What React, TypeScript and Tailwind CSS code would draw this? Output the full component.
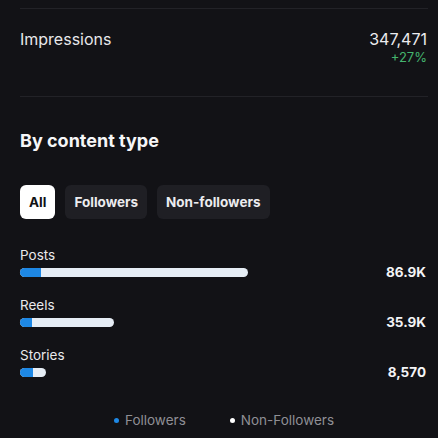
import React from "react";

type Row = { label: string; value: string; total: number; followers: number };

const rows: Row[] = [
  { label: "Posts", value: "86.9K", total: 228, followers: 21 },
  { label: "Reels", value: "35.9K", total: 94, followers: 12 },
  { label: "Stories", value: "8,570", total: 26, followers: 13 },
];

const tabs = ["All", "Followers", "Non-followers"];

function ContentRow({ row }: { row: Row }) {
  return (
    <div className="mt-[20px] first:mt-[28px]">
      <div className="text-[13.5px] leading-4 text-[#e9e9ec]">{row.label}</div>
      <div className="mt-[5px] flex h-[9px] items-center justify-between">
        <div
          className="flex h-[9px] overflow-hidden rounded-full bg-[#e6edf5]"
          style={{ width: row.total }}
        >
          <div className="h-full bg-[#1e88e5]" style={{ width: row.followers }} />
        </div>
        <div className="pr-[2px] text-[13.5px] font-bold leading-none text-[#f4f4f6]">
          {row.value}
        </div>
      </div>
    </div>
  );
}

export default function App() {
  return (
    <div
      className="h-[438px] w-[438px] overflow-hidden bg-[#121216] pl-5 pr-[10px] pt-2"
      style={{ fontFamily: "Inter, 'Liberation Sans', sans-serif" }}
    >
      <div className="h-px bg-[#222227]" />

      <div className="mt-[20px] flex items-start justify-between pr-[1px]">
        <div className="text-[16px] leading-5 text-[#e8e8eb]">Impressions</div>
        <div className="flex flex-col items-end">
          <div className="text-[16px] leading-5 text-[#ececef]">347,471</div>
          <div className="text-[13px] leading-4 text-[#45b46f]">+27%</div>
        </div>
      </div>

      <div className="mt-[31px] h-px bg-[#222227]" />

      <h2 className="mt-[32px] text-[18px] font-bold leading-6 text-[#f6f6f8]">
        By content type
      </h2>

      <div className="mt-[32px] flex gap-[10px]">
        {tabs.map((t, i) => (
          <button
            key={t}
            type="button"
            className={
              i === 0
                ? "h-[34px] rounded-[6px] bg-white px-[9px] text-[13.5px] font-bold text-[#121216]"
                : "h-[34px] rounded-[6px] bg-[#1f1f24] px-[9px] text-[13.5px] font-bold text-[#ececef]"
            }
          >
            {t}
          </button>
        ))}
      </div>

      <div>
        {rows.map((r) => (
          <ContentRow key={r.label} row={r} />
        ))}
      </div>

      <div className="mt-[35px] flex items-center justify-center gap-[44px] text-[13.5px] leading-4 text-[#8f8f95]">
        <div className="flex items-center gap-[6px]">
          <span className="h-[5px] w-[5px] rounded-full bg-[#1e88e5]" />
          Followers
        </div>
        <div className="flex items-center gap-[6px]">
          <span className="h-[5px] w-[5px] rounded-full bg-white" />
          Non-Followers
        </div>
      </div>
    </div>
  );
}
